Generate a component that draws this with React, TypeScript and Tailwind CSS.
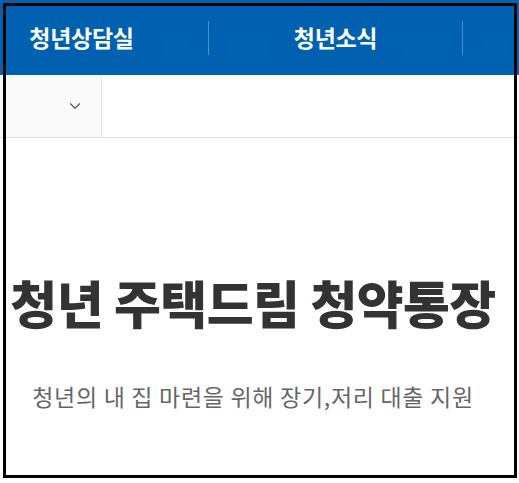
import { ChevronDown } from 'lucide-react';

const navItems = ['청년상담실', '청년소식'];

function TopNav() {
  return (
    <div className="h-[75px] overflow-hidden bg-[#0061b0]">
      <ul className="ml-[-45px] flex h-full items-center">
        {navItems.map((item) => (
          <li
            key={item}
            className="flex h-[34px] w-[254px] shrink-0 items-center justify-center border-r border-white/30 text-[23px] font-bold tracking-[-0.3px] text-white"
          >
            {item}
          </li>
        ))}
      </ul>
    </div>
  );
}

function SubBar() {
  return (
    <div className="flex h-[63px] border-b border-[#e2e2e6]">
      <button type="button" className="flex w-[102px] items-center justify-end border-r border-[#e6e6ea] bg-[#fafafa] pr-[17px]">
        <ChevronDown className="h-[18px] w-[18px] text-[#555]" strokeWidth={1.5} />
      </button>
      <div className="flex-1 bg-white" />
    </div>
  );
}

export default function App() {
  return (
    <div className="relative h-[483px] w-[519px] overflow-hidden bg-white font-['Noto_Sans_CJK_KR',sans-serif]">
      <TopNav />
      <SubBar />

      <section className="flex flex-col items-center pt-[134px] pr-[13px]">
        <h1 className="text-[51px] leading-[60px] font-black tracking-[-0.6px] whitespace-nowrap text-[#333]">
          청년 주택드림 청약통장
        </h1>
        <p className="mt-[49px] text-[23px] leading-[30px] tracking-[0.7px] whitespace-nowrap text-[#666]">
          청년의 내 집 마련을 위해 장기,저리 대출 지원
        </p>
      </section>

      {/* annotation frame over the page */}
      <div className="pointer-events-none absolute top-[3px] left-[3px] h-[475px] w-[514px] border-[3px] border-black" />
    </div>
  );
}
